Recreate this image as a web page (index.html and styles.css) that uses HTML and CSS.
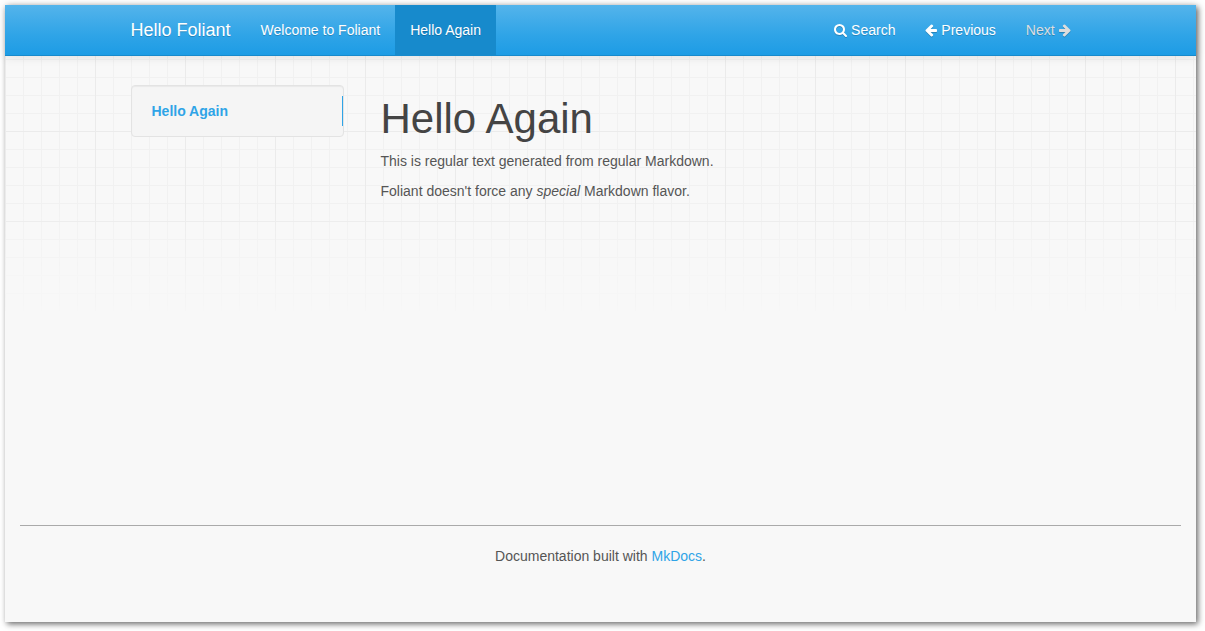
FILE: index.html
```html
<!DOCTYPE html>
<html lang="en">
<head>
<meta charset="utf-8">
<meta name="viewport" content="width=device-width, initial-scale=1">
<title>Hello Again - Hello Foliant</title>
<link rel="stylesheet" href="styles.css">
</head>
<body>
<div class="page">
  <header class="navbar">
    <div class="container navbar-inner">
      <a class="brand" href="#">Hello Foliant</a>
      <nav class="nav" aria-label="Pages">
        <a class="nav-link" href="#">Welcome to Foliant</a>
        <a class="nav-link active" href="#" aria-current="page">Hello Again</a>
      </nav>
      <nav class="nav nav-right" aria-label="Tools">
        <a class="nav-link" href="#"><svg class="icon icon-search" viewBox="0 0 1664 1664" aria-hidden="true"><path d="M1152 704q0-185-131.500-316.500T704 256 387.500 387.500 256 704t131.500 316.500T704 1152t316.500-131.500T1152 704zm512 832q0 52-38 90t-90 38q-54 0-90-38l-343-342q-179 124-399 124-143 0-273.500-55.500t-225-150-150-225T0 704t55.500-273.500 150-225 225-150T704 0t273.500 55.500 225 150 150 225T1408 704q0 220-124 399l343 343q37 37 37 90z"/></svg> Search</a>
        <a class="nav-link" href="#"><svg class="icon icon-arrow" viewBox="0 128 1536 1664" aria-hidden="true"><path d="M1536 896v128q0 53-32.500 90.500T1419 1152H715l293 294q38 36 38 90t-38 90l-75 76q-37 37-90 37-52 0-91-37l-651-652Q64 1013 64 960q0-52 37-91l651-650q38-38 91-38 52 0 90 38l75 74q38 38 38 91t-38 91L715 768h704q52 0 84.500 37.500T1536 896z"/></svg> Previous</a>
        <a class="nav-link disabled" aria-disabled="true">Next <svg class="icon icon-arrow" viewBox="0 128 1536 1664" aria-hidden="true"><path transform="translate(1536 0) scale(-1 1)" d="M1536 896v128q0 53-32.500 90.500T1419 1152H715l293 294q38 36 38 90t-38 90l-75 76q-37 37-90 37-52 0-91-37l-651-652Q64 1013 64 960q0-52 37-91l651-650q38-38 91-38 52 0 90 38l75 74q38 38 38 91t-38 91L715 768h704q52 0 84.500 37.500T1536 896z"/></svg></a>
      </nav>
    </div>
  </header>
  <div class="container columns">
    <nav class="sidebar" aria-label="On this page">
      <a class="sidebar-link" href="#hello-again">Hello Again</a>
    </nav>
    <main class="content">
      <h1 id="hello-again">Hello Again</h1>
      <p>This is regular text generated from regular Markdown.</p>
      <p>Foliant doesn't force any <em>special</em> Markdown flavor.</p>
    </main>
  </div>
  <footer class="footer">
    <p>Documentation built with <a href="#">MkDocs</a>.</p>
  </footer>
</div>
</body>
</html>
```
FILE: styles.css
```css
* {
  box-sizing: border-box;
}

body {
  margin: 0;
  padding: 5px 9px 9px 5px;
  min-height: 100vh;
  display: flex;
  background: #fff;
  color: #555;
  font: 14px/20px "Liberation Sans", Arial, sans-serif;
}

a {
  color: #2fa4e7;
  text-decoration: none;
}

.page {
  flex: 1;
  min-width: 0;
  display: flex;
  flex-direction: column;
  position: relative;
  z-index: 0;
  background: #f8f8f8;
  box-shadow: 2px 2px 6px rgba(0, 0, 0, 0.6);
}

/* Graph-paper backdrop that fades out below the heading area */
.page::before {
  content: "";
  position: absolute;
  inset: 0 0 auto;
  height: 306px;
  z-index: -1;
  background-image:
    linear-gradient(to right, #ebebeb 1px, transparent 1px),
    linear-gradient(to bottom, #ebebeb 1px, transparent 1px),
    linear-gradient(to right, #f1f1f1 1px, transparent 1px),
    linear-gradient(to bottom, #f1f1f1 1px, transparent 1px);
  background-size: 90px 90px, 90px 90px, 18px 18px, 18px 18px;
  background-position: 0 36px;
  mask-image: linear-gradient(to bottom, #000 200px, rgba(0, 0, 0, 0.3) 280px, rgba(0, 0, 0, 0.15) 306px);
}

.container {
  width: 100%;
  max-width: 970px;
  margin: 0 auto;
  padding: 0 15px;
}

.navbar {
  background: linear-gradient(#54b4eb, #2fa4e7 60%, #1d9ce5);
  border-bottom: 1px solid #178acc;
  box-shadow: 0 1px 10px rgba(0, 0, 0, 0.1);
  text-shadow: 0 1px 0 rgba(0, 0, 0, 0.2);
}

.navbar-inner {
  display: flex;
  flex-wrap: wrap;
}

.brand {
  padding: 15px 15px 15px 0;
  color: #fff;
  font-size: 18px;
}

.nav {
  display: flex;
}

.nav-right {
  margin-left: auto;
  margin-right: -15px;
}

.nav-link {
  padding: 15px;
  color: #fff;
}

.nav-link.active {
  background: #178acc;
}

.nav-link.disabled {
  color: #ddd;
}

.icon {
  height: 13px;
  fill: currentColor;
  vertical-align: -2px;
  filter: drop-shadow(0 1px 0 rgba(0, 0, 0, 0.2));
}

.icon-search {
  width: 13px;
}

.icon-arrow {
  width: 12px;
}

.columns {
  display: flex;
  flex-wrap: wrap;
  align-items: flex-start;
  gap: 20px 37px;
  padding-top: 29px;
}

.sidebar {
  width: 213px;
  padding: 10px 0;
  background: #f5f5f5;
  border: 1px solid #e3e3e3;
  border-radius: 4px;
  box-shadow: inset 0 1px 1px rgba(0, 0, 0, 0.05);
}

.sidebar-link {
  display: block;
  padding: 5px 20px;
  border-right: 1px solid #2fa4e7;
  font-weight: bold;
}

.content {
  flex: 1;
  padding-top: 10px;
}

h1 {
  margin: 0 0 8px;
  color: #444;
  font-size: 42px;
  font-weight: normal;
  line-height: 48px;
}

p {
  margin: 0 0 10px;
}

.footer {
  margin: auto 15px 46px;
  padding-top: 20px;
  border-top: 1px solid #aaa;
  text-align: center;
}
```
